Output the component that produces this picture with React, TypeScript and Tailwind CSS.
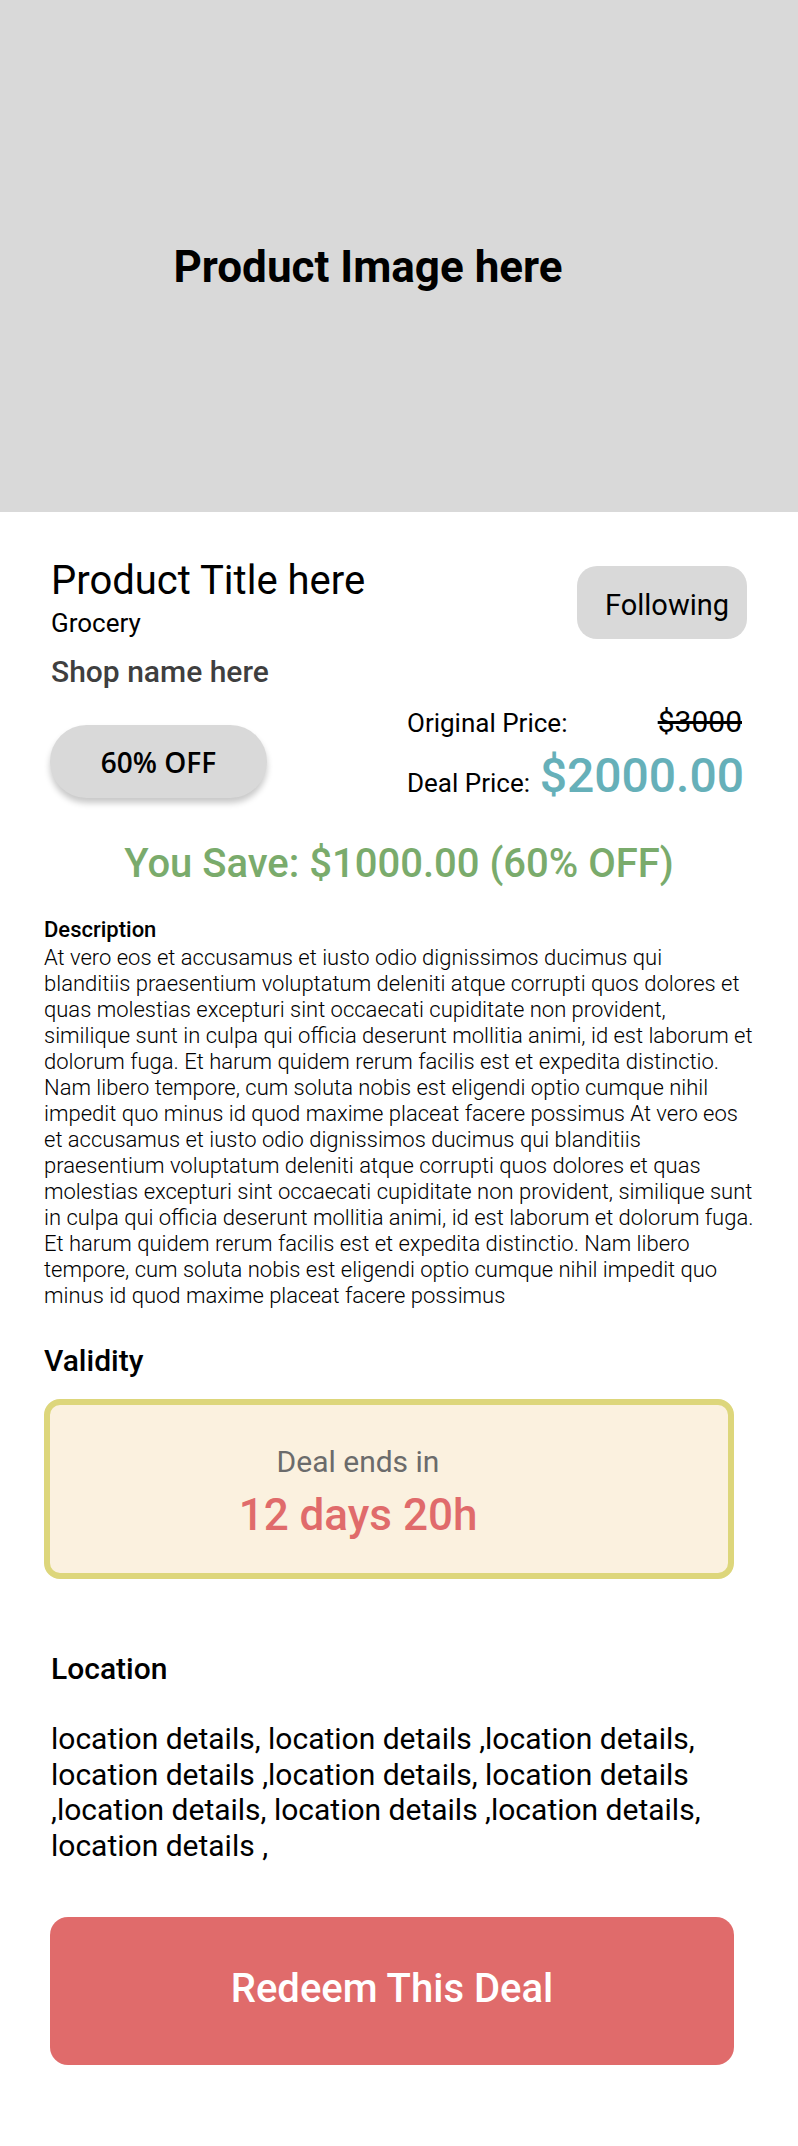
export default function App() {
  const desc = [
    "At vero eos et accusamus et iusto odio dignissimos ducimus qui",
    "blanditiis praesentium voluptatum deleniti atque corrupti quos dolores et",
    "quas molestias excepturi sint occaecati cupiditate non provident,",
    "similique sunt in culpa qui officia deserunt mollitia animi, id est laborum et",
    "dolorum fuga. Et harum quidem rerum facilis est et expedita distinctio.",
    "Nam libero tempore, cum soluta nobis est eligendi optio cumque nihil",
    "impedit quo minus id quod maxime placeat facere possimus At vero eos",
    "et accusamus et iusto odio dignissimos ducimus qui blanditiis",
    "praesentium voluptatum deleniti atque corrupti quos dolores et quas",
    "molestias excepturi sint occaecati cupiditate non provident, similique sunt",
    "in culpa qui officia deserunt mollitia animi, id est laborum et dolorum fuga.",
    "Et harum quidem rerum facilis est et expedita distinctio. Nam libero",
    "tempore, cum soluta nobis est eligendi optio cumque nihil impedit quo",
    "minus id quod maxime placeat facere possimus",
  ];
  const loc = [
    "location details, location details ,location details,",
    "location details ,location details, location details",
    ",location details, location details ,location details,",
    "location details ,",
  ];
  return (
    <div className="w-[798px] min-h-[2146px] bg-white font-['Roboto',sans-serif] text-black">
      <div className="h-[512px] bg-[#d9d9d9] flex items-center justify-center pt-[22px] pr-[62px]">
        <span className="text-[44px] font-bold leading-[52px]">Product Image here</span>
      </div>

      <div className="px-[51px] pt-[47px]">
        <div className="flex justify-between items-start">
          <div className="flex flex-col">
            <h1 className="text-[40px] leading-[44px]">Product Title here</h1>
            <div className="text-[26px] leading-[28px] mt-[6px]">Grocery</div>
            <div className="text-[30px] leading-[33px] font-medium text-[#3f3f3f] mt-[18px]">Shop name here</div>
          </div>
          <button className="mt-[7px] w-[170px] h-[73px] rounded-[20px] bg-[#d9d9d9] text-[29px] flex items-center justify-center pl-[10px] pt-[7px]">
            Following
          </button>
        </div>

        <div className="flex justify-between items-start mt-[19px]">
          <div className="mt-[18px] -ml-px w-[217px] h-[73px] rounded-full bg-[#d9d9d9] shadow-[0_5px_6px_rgba(0,0,0,0.22)] flex items-center justify-center font-['Open_Sans',sans-serif] font-semibold text-[28px]">
            60% OFF
          </div>
          <div className="w-[340px] flex flex-col">
            <div className="flex justify-between items-baseline pr-[5px]">
              <span className="text-[26px] leading-[30px]">Original Price:</span>
              <span className="text-[30px] leading-[30px] line-through">$3000</span>
            </div>
            <div className="flex justify-between items-baseline mt-[10px] pr-[3px]">
              <span className="text-[26px] leading-[30px]">Deal Price:</span>
              <span className="text-[48px] leading-[56px] font-medium text-[#66b0b9]">$2000.00</span>
            </div>
          </div>
        </div>

        <div className="mt-[36px] text-center text-[40px] leading-[47px] font-medium text-[#7aab6c]">
          You Save: $1000.00 (60% OFF)
        </div>
      </div>

      <div className="px-[44px] pt-[32px]">
        <div className="text-[22px] leading-[22px] font-medium">Description</div>
        <div className="mt-[4px] text-[22px] leading-[26px] font-light">
          {desc.map((l, i) => (
            <div key={i} className="whitespace-nowrap">{l}</div>
          ))}
        </div>

        <div className="mt-[35px] text-[30px] leading-[33px] font-medium">Validity</div>
        <div className="mt-[22px] w-[690px] h-[180px] border-[6px] border-[#ddd67b] rounded-[16px] bg-[#fbf1df] flex flex-col items-center justify-center pr-[62px] pt-[7px]">
          <div className="text-[30px] leading-[34px] text-[#6b6b6b]">Deal ends in</div>
          <div className="mt-[11px] text-[44px] leading-[50px] font-medium text-[#e06b6b]">12 days 20h</div>
        </div>
      </div>

      <div className="px-[51px] pb-[80px]">
        <div className="mt-[73px] text-[30px] leading-[33px] font-medium">Location</div>
        <div className="mt-[36px] text-[30px] leading-[35.7px]">
          {loc.map((l, i) => (
            <div key={i} className="whitespace-nowrap">{l}</div>
          ))}
        </div>
        <button className="mt-[53px] -ml-px w-[684px] h-[148px] rounded-[18px] bg-[#e06b6b] text-white text-[40px] font-medium flex items-center justify-center pb-[4px]">
          Redeem This Deal
        </button>
      </div>
    </div>
  );
}
